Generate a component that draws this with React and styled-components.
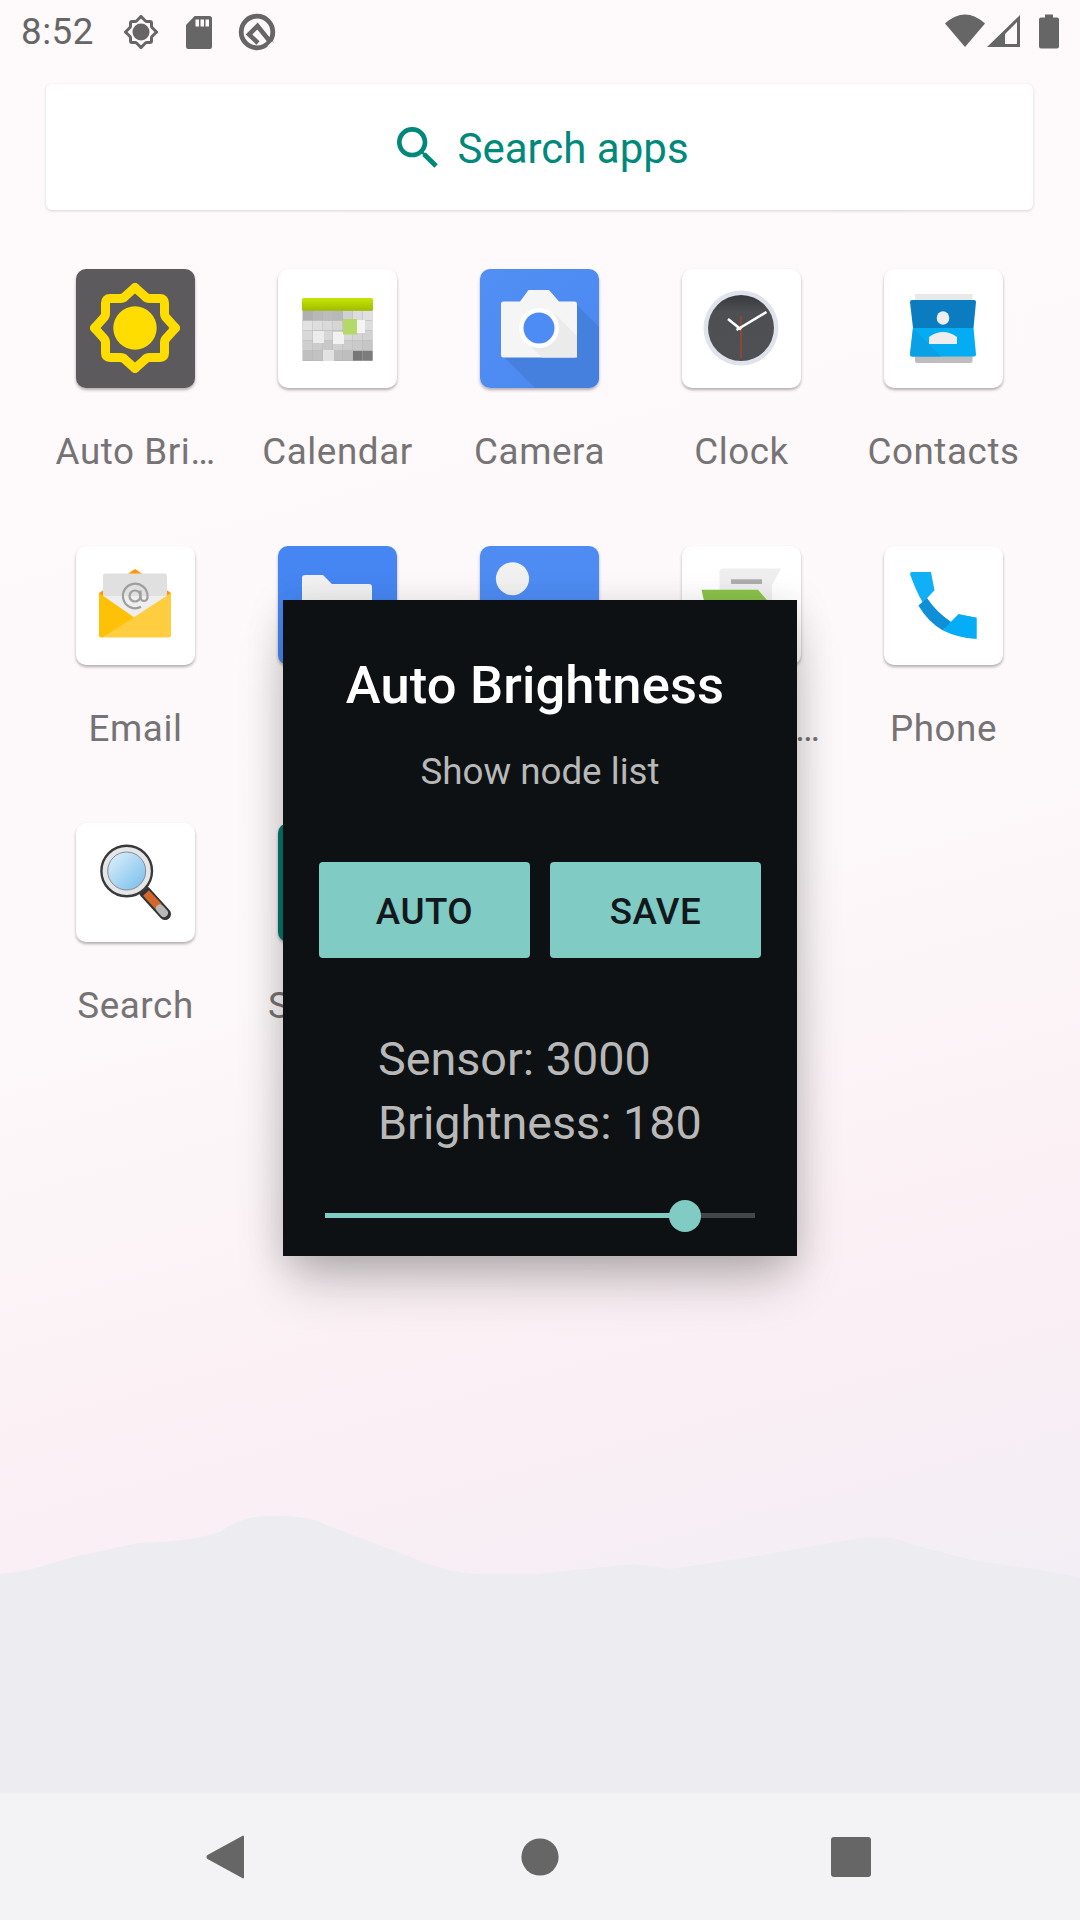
import React from 'react'
import styled, { createGlobalStyle } from 'styled-components'

const GlobalStyle = createGlobalStyle`
  html, body {
    margin: 0;
    padding: 0;
    background: #fdf8fa;
  }
  body {
    font-family: Roboto, "Noto Sans", sans-serif;
  }
  * {
    box-sizing: border-box;
  }
`

const Screen = styled.div`
  position: relative;
  isolation: isolate;
  width: 1080px;
  height: 1920px;
  overflow: hidden;
  display: flex;
  flex-direction: column;
  background: linear-gradient(165deg, #fef9fb 0%, #fdf8fa 48%, #faeff4 70%, #f3eef5 84%);
`

const Mountains = styled.svg`
  position: absolute;
  left: 0;
  top: 1500px;
  z-index: -1;
`

const StatusBar = styled.div`
  height: 63px;
  flex: none;
  display: flex;
  align-items: center;
  padding: 0 21px 0 21px;
  color: #666;
`

const Time = styled.span`
  font-size: 36.75px;
  line-height: 63px;
  letter-spacing: 0.5px;
  width: 72px;
  margin-right: 28px;
  white-space: nowrap;
`

const StatusLeft = styled.div`
  display: flex;
  align-items: center;
  gap: 18px;
`

const StatusRight = styled.div`
  display: flex;
  align-items: center;
  gap: 2px;
  margin-left: auto;
`

const StatusIcon = styled.svg`
  display: block;
  flex: none;
  margin-left: ${p => p.$gap || 0}px;
`

const SearchCard = styled.div`
  flex: none;
  height: 126px;
  margin: 21px 47px 0 46px;
  background: #fff;
  border-radius: 6px;
  box-shadow: 0 1px 3px rgba(60, 40, 50, 0.18);
  display: flex;
  align-items: center;
  justify-content: center;
  gap: 11px;
  color: #00897b;
  font-size: 42px;
  padding-top: 2px;
`

const AppGrid = styled.div`
  flex: none;
  display: grid;
  grid-template-columns: repeat(5, 202px);
  grid-auto-rows: 277px;
  margin: 59px 0 0 34.5px;
`

const AppCell = styled.div`
  display: flex;
  flex-direction: column;
  align-items: center;
`

const IconTile = styled.div`
  width: 119px;
  height: 119px;
  flex: none;
  border-radius: 10px;
  overflow: hidden;
  background: ${p => p.$bg || '#fff'};
  box-shadow: 0 2px 3px rgba(60, 50, 55, 0.38);

  svg {
    display: block;
  }
`

const AppLabel = styled.div`
  width: 160px;
  margin-top: 42px;
  font-size: 36.75px;
  line-height: 44px;
  letter-spacing: 0.6px;
  color: #757374;
  text-align: center;
  white-space: nowrap;
  overflow: hidden;
  text-overflow: ellipsis;
`

const NavBar = styled.div`
  flex: none;
  margin-top: auto;
  height: 127px;
  background: #f3f3f6;
  display: grid;
  grid-template-columns: repeat(3, 315px);
  justify-content: center;
  align-items: center;
  justify-items: center;
`

const Dialog = styled.div`
  position: absolute;
  left: 283px;
  top: 600px;
  width: 514px;
  height: 656px;
  background: #0d1114;
  display: flex;
  flex-direction: column;
  box-shadow: 0 30px 50px -8px rgba(0, 0, 0, 0.24), 0 6px 36px rgba(0, 0, 0, 0.13);
`

const DialogTitle = styled.h1`
  margin: 56px 10px 0 0;
  font-size: 52.5px;
  line-height: 58px;
  letter-spacing: 0.15px;
  font-weight: 500;
  color: #fff;
  text-align: center;
`

const DialogSub = styled.div`
  margin-top: 36px;
  font-size: 36.75px;
  line-height: 44px;
  color: #b8b8b8;
  text-align: center;
`

const ButtonRow = styled.div`
  display: flex;
  gap: 20px;
  margin: 68px 36px 0;
`

const ActionButton = styled.button`
  flex: 1;
  height: 96px;
  border: 0;
  border-radius: 4px;
  background: #80cbc4;
  color: #12181b;
  font-family: inherit;
  font-size: 36.75px;
  font-weight: 500;
  letter-spacing: 0.5px;
  padding: 2px 0 0;
`

const Readout = styled.div`
  margin: 69px 0 0 95px;
  font-size: 46.7px;
  line-height: 64px;
  color: #b8b8b8;
`

const SliderWrap = styled.div`
  position: relative;
  height: 5px;
  margin: 58px 42px 0;
  background: #41474a;
`

const SliderFill = styled.div`
  height: 100%;
  background: #80cbc4;
`

const SliderThumb = styled.div`
  position: absolute;
  top: 50%;
  width: 32px;
  height: 32px;
  border-radius: 50%;
  background: #80cbc4;
  transform: translate(-50%, -50%);
`

const quarterTurns = [0, 90, 180, 270]

// small status bar drawings
const Gear = () => (
  <StatusIcon width="40" height="40" viewBox="0 0 40 40">
    {quarterTurns.map(a => (
      <path key={a} transform={`rotate(${a} 20 20)`} d="M20 4.500L24.500 9Q25 9.500 25.700 9.500H29Q30.500 9.500 30.500 11V14.300Q30.500 15 31 15.500L35.500 20" fill="none" stroke="#666" strokeWidth="3" strokeLinecap="round" />
    ))}
    <circle cx="20" cy="20" r="8.500" fill="#666" />
  </StatusIcon>
)

const SdCard = () => (
  <StatusIcon width="40" height="40" viewBox="0 0 40 40">
    <path fillRule="evenodd" fill="#666" d="M15.700 4H30.500a2.500 2.500 0 0 1 2.500 2.500V34.500a2.500 2.500 0 0 1-2.500 2.500H9.500A2.500 2.500 0 0 1 7 34.500V13zM16.500 7.500v7h3.500v-7zM21.500 7.500v7h3.500v-7zM26.500 7.500v7h3.500v-7z" />
  </StatusIcon>
)

const QBadge = () => (
  <StatusIcon width="40" height="40" viewBox="0 0 40 40">
    <circle cx="20" cy="20" r="15.800" fill="none" stroke="#666" strokeWidth="4.800" />
    <path d="M21 31L12 22.500L20.500 14L35 32" fill="none" stroke="#666" strokeWidth="4.600" />
    <path d="M31 35l5-5" stroke="#fdf8fa" strokeWidth="2" />
  </StatusIcon>
)

const Wifi = () => (
  <StatusIcon width="40" height="40" viewBox="0 0 40 40">
    <path d="M0 11.500Q20-6.500 40 11.500L20 35z" fill="#666" />
  </StatusIcon>
)

const Signal = () => (
  <StatusIcon width="34" height="40" viewBox="0 0 34 40">
    <path fillRule="evenodd" fill="#666" d="M0 35L33 3V35zM18 22L30 10V32H18z" />
  </StatusIcon>
)

const Battery = () => (
  <StatusIcon $gap={16} width="20" height="40" viewBox="0 0 20 40">
    <path fill="#666" d="M6 2.500h8v3h4a2 2 0 0 1 2 2v27a2 2 0 0 1-2 2H2a2 2 0 0 1-2-2V7.500a2 2 0 0 1 2-2h4z" />
  </StatusIcon>
)

const SearchGlyph = () => (
  <svg width="56" height="56" viewBox="0 0 24 24" fill="#00897b">
    <path d="M15.500 14h-.79l-.28-.27A6.471 6.471 0 0 0 16 9.500 6.500 6.500 0 1 0 9.500 16c1.610 0 3.090-.59 4.230-1.570l.27.28v.79l5 4.990L20.490 19l-4.990-5zm-6 0C7.010 14 5 11.990 5 9.500S7.010 5 9.500 5 14 7.010 14 9.500 11.990 14 9.500 14z" />
  </svg>
)

// launcher icons, all on a 119 box
const Art = ({ children }) => (
  <svg width="119" height="119" viewBox="0 0 119 119">{children}</svg>
)

const AutoBrightnessArt = () => (
  <Art>
    {quarterTurns.map(a => (
      <path key={a} transform={`rotate(${a} 59 59)`} d="M59 18.500L69 27.500Q71 29.500 73.500 29.500H84Q88.500 29.500 88.500 34V44.500Q88.500 47 90.500 49L99.500 59" fill="none" stroke="#ffdd00" strokeWidth="9" strokeLinecap="round" />
    ))}
    <circle cx="59" cy="59" r="21.700" fill="#ffdd00" />
  </Art>
)

const calendarRows = [
  ['#b0b0b0', '#b8b8b8', '#bcbcbc', '#b8b8b8', '#d0d0d0', '#dcdcdc', '#e0e0e0'],
  ['#e2e2e2', '#dedede', '#dadada', '#d6d6d6', '#d6d6d6', '#e2e2e2', '#dedede'],
  ['#d8d8d8', '#d2d2d2', '#d6d6d6', '#d2d2d2', '#d8d8d8', '#d4d4d4', '#d2d2d2'],
  ['#cecece', '#cccccc', '#c8c8c8', '#d0d0d0', '#cccccc', '#cacaca', '#c6c6c6'],
  ['#c0c0c0', '#c2c2c2', '#d6d6d6', '#c0c0c0', '#bebebe', '#777777', '#7c7c7c'],
]

const CalendarArt = () => (
  <Art>
    <defs>
      <linearGradient id="calTop" x1="0" y1="0" x2="0" y2="1">
        <stop offset="0" stopColor="#c6e600" />
        <stop offset="1" stopColor="#a0bc00" />
      </linearGradient>
    </defs>
    <rect x="24.500" y="41" width="70" height="51" fill="#b4b4b4" />
    {calendarRows.map((row, r) =>
      row.map((c, i) => (
        <rect key={r + '-' + i} x={25 + i * 10} y={41.700 + r * 10.060} width="9.600" height="9.600" fill={c} />
      ))
    )}
    <rect x="24" y="29" width="71" height="12.700" rx="1.500" fill="url(#calTop)" />
    <rect x="35" y="62" width="11" height="12" fill="#ececec" />
    <rect x="55" y="63" width="11" height="12" fill="#f2f2f2" />
    <rect x="78" y="51" width="9" height="13" fill="#f4f4f4" />
    <rect x="45" y="81" width="11" height="11" fill="#e2e2e2" />
    <rect x="65" y="50" width="14" height="15.500" fill="#b4d968" />
  </Art>
)

const CameraArt = () => (
  <Art>
    <defs>
      <linearGradient id="camBg" x1="0" y1="0" x2="1" y2="1">
        <stop offset="0" stopColor="#528ff5" />
        <stop offset="1" stopColor="#4a88ef" />
      </linearGradient>
    </defs>
    <rect width="119" height="119" fill="url(#camBg)" />
    <path d="M97 36L119 58V119H55L21 85z" fill="#4680de" />
    <path d="M21 35a2.500 2.500 0 0 1 2.500-2.500H40L48.500 21H69L79 32.500H94.500A2.500 2.500 0 0 1 97 35V86a2.500 2.500 0 0 1-2.500 2.500H23.500A2.500 2.500 0 0 1 21 86z" fill="#f5f5f5" />
    <path d="M74 44L97 67V88.500H62L45 72z" fill="#ebebeb" />
    <circle cx="59" cy="59" r="20" fill="#fff" />
    <circle cx="59" cy="59" r="15.500" fill="#4e8cf5" />
  </Art>
)

const ClockArt = () => (
  <Art>
    <defs>
      <linearGradient id="clockFace" x1="0" y1="0" x2="0" y2="1">
        <stop offset="0" stopColor="#37393b" />
        <stop offset="0.25" stopColor="#4d4f52" />
        <stop offset="1" stopColor="#4e5053" />
      </linearGradient>
    </defs>
    <circle cx="59" cy="59" r="37.500" fill="#dfe3ec" />
    <circle cx="59" cy="59" r="33" fill="url(#clockFace)" />
    <path d="M59 47V89" stroke="#a0452f" strokeWidth="1.500" />
    <path d="M46 50L59 60.500" stroke="#fff" strokeWidth="2.600" />
    <path d="M54.500 61L84.500 43" stroke="#fff" strokeWidth="2.600" />
  </Art>
)

const ContactsArt = () => (
  <Art>
    <rect x="31" y="25" width="57.500" height="12" fill="#e9e9e9" />
    <rect x="31" y="84" width="57.500" height="10" rx="2" fill="#bdbdbd" />
    <path d="M26 33a2 2 0 0 1 2-2H90a2 2 0 0 1 2 2L89.500 59H29z" fill="#0a7cbf" />
    <path d="M29 59H89.500L92 85.500a2 2 0 0 1-2 2H28a2 2 0 0 1-2-2z" fill="#04acf4" />
    <path d="M29 59L57 87.500H28a2 2 0 0 1-2-2z" fill="#0aa0e6" />
    <ellipse cx="59" cy="49" rx="6.300" ry="6.800" fill="#eeeeee" />
    <path d="M45 68Q59 58 73 68V75H45z" fill="#eeeeee" />
  </Art>
)

const EmailArt = () => (
  <Art>
    <path d="M23 47L59 23L95 47V60H23z" fill="#ff9800" />
    <path d="M27 30a2.500 2.500 0 0 1 2.500-2.500H88.500A2.500 2.500 0 0 1 91 30V60H27z" fill="#e0e0e0" />
    <path d="M27 50H91V60L59 74L27 60z" fill="#eeeeee" />
    <circle cx="59" cy="50" r="5.500" fill="none" stroke="#9e9e9e" strokeWidth="2.200" />
    <path d="M64.500 44.500V51.500a3.500 3.500 0 0 0 7 0V50A12.300 12.300 0 1 0 65 60.800" fill="none" stroke="#9e9e9e" strokeWidth="2.200" />
    <path d="M23 47L59 72L27 91.500H25a2 2 0 0 1-2-2z" fill="#ffc107" />
    <path d="M95 47V89.500a2 2 0 0 1-2 2H27z" fill="#ffcd40" />
  </Art>
)

const FilesArt = () => (
  <Art>
    <path d="M24 32a3 3 0 0 1 3-3H45L54 38H91a3 3 0 0 1 3 3V90H24z" fill="#f1f1f1" />
  </Art>
)

const GalleryArt = () => (
  <Art>
    <ellipse cx="32.500" cy="32.700" rx="16.600" ry="16.500" fill="#f1f1f1" />
  </Art>
)

const MessagingArt = () => (
  <Art>
    <path d="M37.500 26a3.500 3.500 0 0 1 3.500-3.500H99L90 39V90H37.500z" fill="#efefef" />
    <rect x="49" y="33.300" width="31" height="4.700" fill="#adadad" />
    <path d="M19.500 43.700H76L90 60V90H30z" fill="#8bc34a" />
  </Art>
)

const PhoneArt = () => (
  <Art>
    <path d="M26 28a2 2 0 0 1 2-2H47L50.500 44.300L43 52.300Q52 66 67 76L74.600 68.300L92.500 71.700V92.700Q48 92 26 28z" fill="#11b0f6" />
    <path d="M34.400 59.500L43 52.300Q52 66 67 76L59 84.500Q44 76 34.400 59.500z" fill="#0e8fd6" />
    <path d="M59 84.500L67 76L74.600 68.300L92.500 71.700V92.700Q74 92 59 84.500z" fill="#05adf6" />
  </Art>
)

const MagnifierArt = () => (
  <Art>
    <defs>
      <linearGradient id="lens" x1="0" y1="0" x2="1" y2="1">
        <stop offset="0" stopColor="#e2f2fb" />
        <stop offset="1" stopColor="#74bcec" />
      </linearGradient>
    </defs>
    <path d="M69 69L89 91" stroke="#333" strokeWidth="12" strokeLinecap="round" />
    <path d="M70 70L83 84" stroke="#d2662c" strokeWidth="8" />
    <path d="M84 85.500L88 90" stroke="#b8b8b8" strokeWidth="8" strokeLinecap="round" />
    <circle cx="50.700" cy="48" r="25.300" fill="#e4e6ea" stroke="#3a3a3a" strokeWidth="2.400" />
    <circle cx="50.700" cy="48" r="19" fill="url(#lens)" stroke="#8a8a8a" strokeWidth="1" />
  </Art>
)

const SettingsArt = () => <Art />

const apps = [
  { name: 'Auto Brightness', bg: '#5c5a5c', Art: AutoBrightnessArt },
  { name: 'Calendar', Art: CalendarArt },
  { name: 'Camera', Art: CameraArt },
  { name: 'Clock', Art: ClockArt },
  { name: 'Contacts', Art: ContactsArt },
  { name: 'Email', Art: EmailArt },
  { name: 'Files', bg: '#4686f2', Art: FilesArt },
  { name: 'Gallery', bg: '#4e8cf3', Art: GalleryArt },
  { name: 'Messaging', Art: MessagingArt },
  { name: 'Phone', Art: PhoneArt },
  { name: 'Search', Art: MagnifierArt },
  { name: 'Settings', bg: '#00796b', Art: SettingsArt },
]

const sliderValue = 0.837

export default function App() {
  return (
    <Screen>
      <GlobalStyle />
      <Mountains width="1080" height="320" viewBox="0 0 1080 320">
        <path fill="#edecf0" d="M0 74C25 72 45 66 69 58L138 43C170 42 195 40 220 32C240 18 255 16 275 16C295 16 312 18 324 24L413 58C440 70 465 74 482 74H537L634 64L671 69L758 56L860 38C875 36 895 36 910 44L971 60C1010 66 1050 70 1080 78V320H0z" />
      </Mountains>
      <StatusBar>
        <Time>8:52</Time>
        <StatusLeft>
          <Gear />
          <SdCard />
          <QBadge />
        </StatusLeft>
        <StatusRight>
          <Wifi />
          <Signal />
          <Battery />
        </StatusRight>
      </StatusBar>
      <SearchCard>
        <SearchGlyph />
        <span>Search apps</span>
      </SearchCard>
      <AppGrid>
        {apps.map(app => (
          <AppCell key={app.name}>
            <IconTile $bg={app.bg}>
              <app.Art />
            </IconTile>
            <AppLabel>{app.name}</AppLabel>
          </AppCell>
        ))}
      </AppGrid>
      <NavBar>
        <svg width="60" height="60" viewBox="0 0 60 60" fill="#666">
          <path d="M49 9.500V50.500a1 1 0 0 1-1.800.6L12.500 32a2.500 2.500 0 0 1 0-4L47.200 9a1 1 0 0 1 1.800.5z" />
        </svg>
        <svg width="60" height="60" viewBox="0 0 60 60" fill="#666">
          <circle cx="30" cy="30" r="18.600" />
        </svg>
        <svg width="60" height="60" viewBox="0 0 60 60" fill="#666">
          <rect x="6" y="10" width="40" height="40" rx="3" />
        </svg>
      </NavBar>
      <Dialog>
        <DialogTitle>Auto Brightness</DialogTitle>
        <DialogSub>Show node list</DialogSub>
        <ButtonRow>
          <ActionButton>AUTO</ActionButton>
          <ActionButton>SAVE</ActionButton>
        </ButtonRow>
        <Readout>
          Sensor: 3000
          <br />
          Brightness: 180
        </Readout>
        <SliderWrap>
          <SliderFill style={{ width: `${sliderValue * 100}%` }} />
          <SliderThumb style={{ left: `${sliderValue * 100}%` }} />
        </SliderWrap>
      </Dialog>
    </Screen>
  )
}
